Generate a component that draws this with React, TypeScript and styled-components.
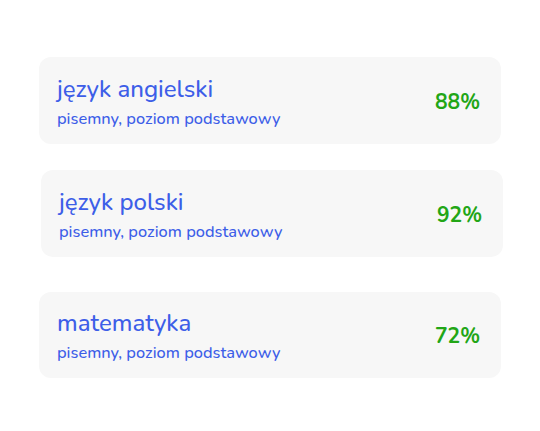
import React from "react";
import styled, { createGlobalStyle } from "styled-components";

const Global = createGlobalStyle`
  html, body { margin: 0; padding: 0; background: #ffffff; }
  body { font-family: "Nunito", "Lato", "Noto Sans", sans-serif; }
`;

const Page = styled.main`
  width: 540px;
  height: 431px;
  padding-top: 57px;
  box-sizing: border-box;
  display: flex;
  flex-direction: column;
`;

const Card = styled.section<{ $left: number; $top: number; $h: number }>`
  margin-left: ${(p) => p.$left}px;
  margin-top: ${(p) => p.$top}px;
  width: 462px;
  height: ${(p) => p.$h}px;
  box-sizing: border-box;
  background: #f7f7f7;
  border-radius: 12px;
  padding: 0 21px 0 18px;
  display: flex;
  align-items: center;
  justify-content: space-between;
`;

const Info = styled.div`
  display: flex;
  flex-direction: column;
  gap: 6px;
  padding-top: 2px;
`;

const Title = styled.h2`
  margin: 0;
  font-size: 24px;
  line-height: 28px;
  font-weight: 500;
  color: #3d5ee8;
`;

const Subtitle = styled.p`
  margin: 0;
  font-size: 16.4px;
  line-height: 20px;
  font-weight: 500;
  color: #3d5ee8;
`;

const Score = styled.span`
  font-size: 21px;
  font-weight: 700;
  color: #22a616;
  padding-top: 2px;
`;

const items = [
  { title: "język angielski", score: "88%", left: 39, top: 0, h: 87 },
  { title: "język polski", score: "92%", left: 41, top: 26, h: 87 },
  { title: "matematyka", score: "72%", left: 39, top: 35, h: 86 },
];

export default function App() {
  return (
    <>
      <Global />
      <Page>
        {items.map((it) => (
          <Card key={it.title} $left={it.left} $top={it.top} $h={it.h}>
            <Info>
              <Title>{it.title}</Title>
              <Subtitle>pisemny, poziom podstawowy</Subtitle>
            </Info>
            <Score>{it.score}</Score>
          </Card>
        ))}
      </Page>
    </>
  );
}
